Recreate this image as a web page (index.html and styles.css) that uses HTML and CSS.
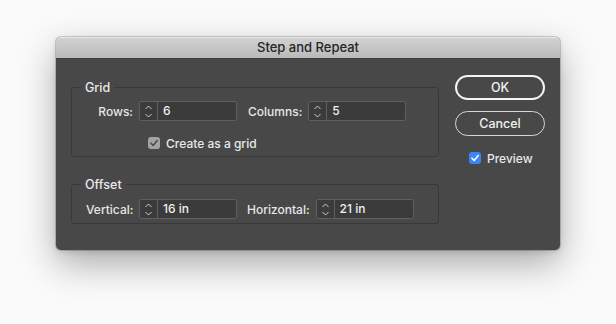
FILE: index.html
```html
<!DOCTYPE html>
<html lang="en">
<head>
<meta charset="utf-8">
<title>Step and Repeat</title>
<link rel="stylesheet" href="styles.css">
</head>
<body>
<div class="dialog">
  <div class="titlebar">Step and Repeat</div>
  <div class="dialog-body">
    <div class="left-col">
      <fieldset class="group group-grid">
        <legend>Grid</legend>
        <div class="field-row">
          <label class="lbl lbl-first">Rows:</label>
          <div class="spinner">
            <span class="stepper"><svg width="17" height="18" viewBox="0 0 17 18"><polyline points="5.5,7 8.5,4 11.5,7" /><polyline points="5.5,12 8.5,15 11.5,12" /></svg></span>
            <span class="value">6</span>
          </div>
          <label class="lbl lbl-second">Columns:</label>
          <div class="spinner">
            <span class="stepper"><svg width="17" height="18" viewBox="0 0 17 18"><polyline points="5.5,7 8.5,4 11.5,7" /><polyline points="5.5,12 8.5,15 11.5,12" /></svg></span>
            <span class="value">5</span>
          </div>
        </div>
        <div class="check-row">
          <span class="checkbox checkbox-gray"><svg width="12" height="12" viewBox="0 0 12 12"><polyline points="3,6.2 5.2,8.5 9.2,3.5" /></svg></span>
          <span class="check-label">Create as a grid</span>
        </div>
      </fieldset>
      <fieldset class="group group-offset">
        <legend>Offset</legend>
        <div class="field-row">
          <label class="lbl lbl-first">Vertical:</label>
          <div class="spinner">
            <span class="stepper"><svg width="17" height="18" viewBox="0 0 17 18"><polyline points="5.5,7 8.5,4 11.5,7" /><polyline points="5.5,12 8.5,15 11.5,12" /></svg></span>
            <span class="value">16 in</span>
          </div>
          <label class="lbl lbl-second lbl-second-b">Horizontal:</label>
          <div class="spinner">
            <span class="stepper"><svg width="17" height="18" viewBox="0 0 17 18"><polyline points="5.5,7 8.5,4 11.5,7" /><polyline points="5.5,12 8.5,15 11.5,12" /></svg></span>
            <span class="value">21 in</span>
          </div>
        </div>
      </fieldset>
    </div>
    <div class="right-col">
      <button class="btn btn-default">OK</button>
      <button class="btn">Cancel</button>
      <div class="preview-row">
        <span class="checkbox checkbox-blue"><svg width="12" height="12" viewBox="0 0 12 12"><polyline points="3,6.2 5.2,8.5 9.2,3.5" /></svg></span>
        <span class="check-label">Preview</span>
      </div>
    </div>
  </div>
</div>
</body>
</html>
```

FILE: styles.css
```css
* { box-sizing: border-box; }

html {
  background: #fafafa;
  min-height: 100%;
}

body {
  margin: 0;
  min-height: 324px;
  font-family: Inter, "Open Sans", "Liberation Sans", sans-serif;
  font-size: 12px;
  font-weight: 500;
  color: #e6e6e6;
  padding: 37px 0 0 56px;
}

.dialog {
  position: relative;
  width: 504px;
  height: 213px;
  border-radius: 5px;
  background: #484848;
  box-shadow: 0 0 0 1px rgba(0,0,0,0.16), 0 14px 36px rgba(0,0,0,0.32), 0 2px 6px rgba(0,0,0,0.12);
  display: flex;
  flex-direction: column;
}

.titlebar {
  height: 22px;
  flex: none;
  border-radius: 5px 5px 0 0;
  background: linear-gradient(#d2d2d2, #bababa);
  border-bottom: 1px solid #3a3a3a;
  color: #262626;
  font-size: 13px;
  font-weight: 500;
  line-height: 21px;
  text-align: center;
  box-shadow: inset 0 1px 0 rgba(255,255,255,0.5);
}

.dialog-body {
  display: flex;
  align-items: flex-start;
  padding: 16px 15px 0 15px;
}

.left-col {
  width: 368px;
  margin-top: 5px;
  display: flex;
  flex-direction: column;
  gap: 20px;
}

.group {
  margin: 0;
  border: 1px solid #393939;
  border-radius: 3px;
  padding: 6px 10px 3px 14px;
  min-width: 0;
}

.group-offset {
  padding-top: 7px;
  padding-bottom: 4px;
}

.group legend {
  padding: 0 4px;
  margin-left: -5px;
  line-height: 15px;
  font-size: 12.5px;
  color: #e8e8e8;
}

.field-row {
  display: flex;
  align-items: center;
  height: 20px;
}

.lbl {
  color: #e6e6e6;
}

.lbl-first {
  width: 47px;
  text-align: right;
  margin-right: 6px;
}

.lbl-second {
  margin-left: 11px;
  margin-right: 6px;
}

.lbl-second-b {
  margin-left: 10px;
}

.spinner {
  width: 98px;
  height: 20px;
  display: flex;
  border: 1px solid #5f5f5f;
  border-radius: 2px;
  background: #3b3b3b;
}

.stepper {
  width: 18px;
  flex: none;
  border-right: 1px solid #5f5f5f;
  display: flex;
}

.stepper svg polyline {
  fill: none;
  stroke: #cfcfcf;
  stroke-width: 1;
}

.value {
  padding-left: 5px;
  line-height: 18px;
  color: #f0f0f0;
}

.check-row {
  display: flex;
  align-items: center;
  height: 20px;
  margin-top: 12px;
  padding-left: 62px;
}

.checkbox {
  width: 12px;
  height: 12px;
  border-radius: 3px;
  display: inline-flex;
  flex: none;
  margin-right: 6px;
}

.checkbox svg polyline {
  fill: none;
  stroke-width: 1.6;
  stroke-linecap: round;
  stroke-linejoin: round;
}

.checkbox-gray {
  background: #a3a3a3;
}

.checkbox-gray svg polyline {
  stroke: #4d4d4d;
}

.checkbox-blue {
  background: #3b86f7;
}

.checkbox-blue svg polyline {
  stroke: #ffffff;
}

.check-label {
  color: #e8e8e8;
}

.right-col {
  margin-left: 16px;
  width: 90px;
  display: flex;
  flex-direction: column;
  align-items: stretch;
}

.btn {
  height: 25px;
  border: 1px solid #d6d6d6;
  border-radius: 13px;
  background: transparent;
  color: #f2f2f2;
  font-family: inherit;
  font-size: 12.5px;
  font-weight: 500;
  padding: 0;
  margin: 0 0 11px 0;
}

.btn-default {
  border: 2px solid #f4f4f4;
}

.preview-row {
  display: flex;
  align-items: center;
  height: 14px;
  margin-top: 4px;
  padding-left: 14px;
}
```
